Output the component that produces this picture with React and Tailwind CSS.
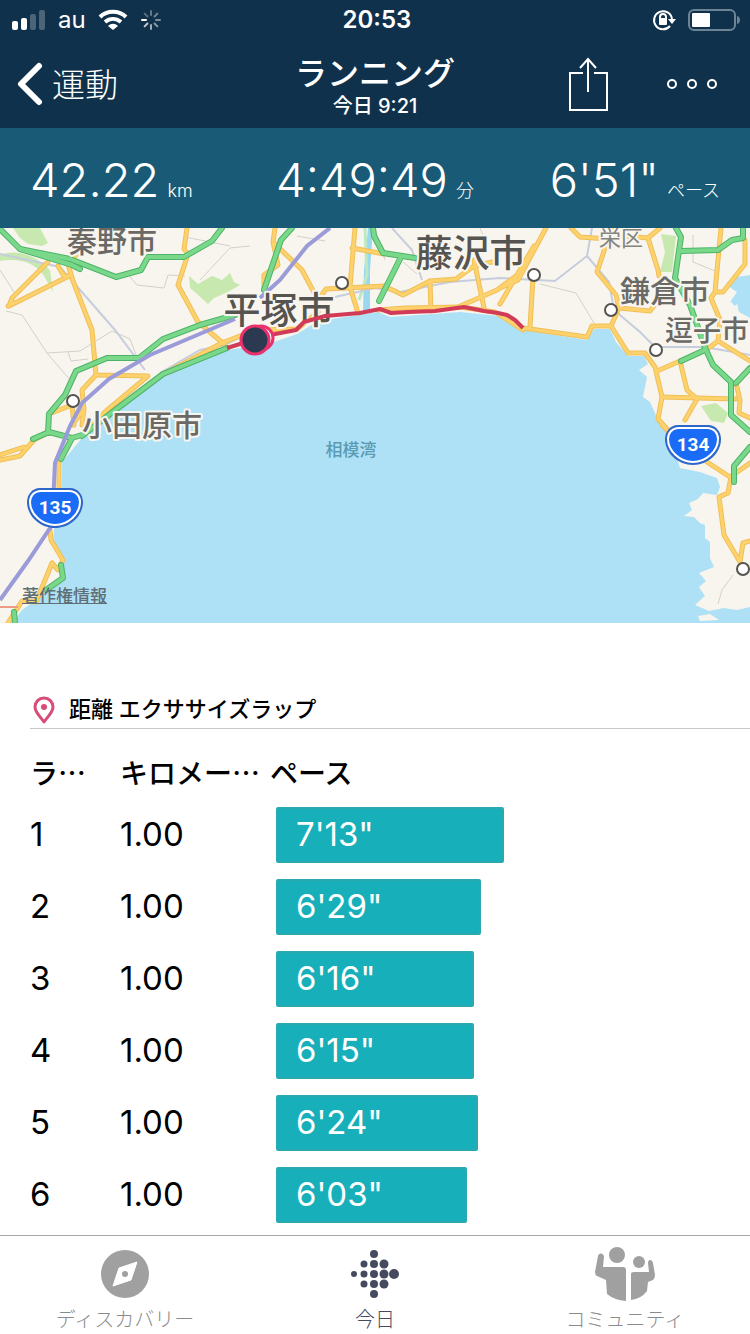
import React from 'react';

const laps = [
  { lap: 1, km: '1.00', pace: `7'13"`, seconds: 433 },
  { lap: 2, km: '1.00', pace: `6'29"`, seconds: 389 },
  { lap: 3, km: '1.00', pace: `6'16"`, seconds: 376 },
  { lap: 4, km: '1.00', pace: `6'15"`, seconds: 375 },
  { lap: 5, km: '1.00', pace: `6'24"`, seconds: 384 },
  { lap: 6, km: '1.00', pace: `6'03"`, seconds: 363 },
];

// Pace that would fill the whole bar column
const FULL_BAR_SECONDS = 843;

const greenRoads = [
  'M0 229 L20 249 L70 259 L116 277 L141 270 L148 257 L184 257 L212 241 L222 228',
  'M20 249 L72 265 L80 269',
  'M235 315 L200 325 L163 339 L139 358 L107 358 L76 371 L65 395 L49 414 L48 433',
  'M227 348 L163 374 L110 414 L82 436',
  'M33 439 L49 432 L72 438 L82 435 M72 438 L61 459',
  'M292 228 L281 240 L264 290',
  'M373 228 L374 236 L383 253 L415 258 M401 257 L379 301',
  'M676 228 L681 237 L675 278 L690 305 L706 350 L713 365 L731 382 L731 415 L750 432',
  'M681 251 L718 250 L732 240 L743 238 L743 228',
  'M681 361 L705 350 M736 383 L750 368',
  'M750 447 L734 466 L734 482',
  'M61 565 L63 578 L46 590 M15 623 L14 612',
];

const yellowRoads = [
  'M48 262 L12 298 L9 306 L69 276 L64 276 L58 266 M12 302 L8 306',
  'M78 253 L68 264 L73 281 L92 330 L96 375 M96 375 L148 376 L105 412 L82 436',
  'M96 375 L82 390 L84 410 L82 425 M49 414 L72 405 L74 425',
  'M187 228 L184 249 L188 254 L178 285 L198 322 L224 344',
  'M160 376 L222 343 L255 330 L297 329 L318 312',
  'M275 228 L273 242 L302 270 L318 300 M273 242 L278 265 L264 275 L264 290',
  'M355 228 L350 287 L358 313 M352 248 L384 254',
  'M318 300 L326 289 L384 286 L403 295 L430 281 L456 279 L474 266 L492 262',
  'M430 281 L431 311 M474 260 L484 308',
  'M500 288 L518 280 L546 228 M458 307 L497 290 L516 276',
  'M500 304 L534 246 M533 277 L530 327',
  'M378 310 L405 308 L460 307 L495 312 L523 330',
  'M523 328 L587 337 L592 326 L611 326 L628 353 L645 353 L655 367 L662 397 L658 419 L667 429',
  'M611 326 L619 308 L650 311 L656 303',
  'M571 228 L580 237 L608 239 L597 272 L616 295 L619 308',
  'M648 238 L660 228 M648 238 L658 270 L659 276',
  'M612 228 L614 235 L648 238',
  'M721 228 L715 292 L723 292 L745 264 L745 240 M715 292 L711 298 L720 320 L718 341 L750 361',
  'M657 371 L680 361 L687 390 L697 399 L685 420',
  'M680 361 L706 350 L718 341 M662 397 L736 399 M736 383 L740 400 L739 413 L750 418',
  'M662 425 L680 443 M707 462 L730 477 L750 463',
  'M731 477 L728 493 L719 497 L724 535 L740 562 L743 543 L750 541',
  'M0 460 L20 456 L34 440 L49 432 M0 455 L24 447',
  'M59 459 L59 492 M50 530 L51 540 L63 560 L58 570 L52 563 L36 602 L22 601 L8 623',
  'M72 425 L82 412',
];

const railways = [
  'M0 600 L28 561 L52 525 L55 463 L70 426 L82 403 L109 379 L150 355 L235 319',
  'M260 298 L280 280 L307 246 L330 228',
];

const thinRails = [
  'M0 254 L60 267 L115 330 L145 370',
  'M160 373 L200 350 L225 345 L258 328',
  'M335 297 L375 288 L400 292 L450 282 L500 278 L555 281 L587 256 L592 228',
  'M392 228 L412 250 L422 280',
  'M587 256 L609 282 L614 310 L640 332 L655 347 L705 347 L750 355',
];

const footpaths = [
  'M0 270 L14 292 M6 311 L22 315 L47 353 L71 381',
  'M47 353 L80 351 L112 331 L130 339 L138 360',
  'M126 272 L137 285 L164 288 L168 275 L185 276 M200 280 L230 248 L250 246',
  'M68 352 L71 361 L88 359 M185 237 L230 246',
  'M297 236 L325 241 M385 260 L375 228 M403 262 L417 274 M480 228 L485 240',
  'M540 284 L576 293 L594 323 M693 235 L693 262 L715 271',
  'M718 604 L722 590 L733 575',
];

const stations = [
  [342, 283],
  [534, 275],
  [611, 310],
  [656, 350],
  [73, 401],
  [743, 569],
];

const places = [
  { name: '秦野市', x: 112, y: 252, className: 'text-[30px] font-medium fill-[#6a6965]' },
  { name: '藤沢市', x: 471, y: 267, className: 'text-[37px] font-medium fill-[#555450]' },
  { name: '平塚市', x: 279, y: 324, className: 'text-[37px] font-medium fill-[#555450]' },
  { name: '小田原市', x: 142, y: 436, className: 'text-[30px] font-medium fill-[#6a6965]' },
  { name: '鎌倉市', x: 665, y: 302, className: 'text-[30px] font-medium fill-[#6a6965]' },
  { name: '逗子市', x: 707, y: 341, className: 'text-[28px] font-medium fill-[#6a6965]' },
  { name: '栄区', x: 621, y: 246, className: 'text-[22px] fill-[#85837f]' },
];

const Roads = ({ paths, casing, fill, outer, inner }) => (
  <g fill="none" strokeLinejoin="round" strokeLinecap="round">
    {paths.map((d) => (
      <path key={d} d={d} stroke={casing} strokeWidth={outer} />
    ))}
    {paths.map((d) => (
      <path key={`${d}-in`} d={d} stroke={fill} strokeWidth={inner} />
    ))}
  </g>
);

const Shield = ({ x, y, number }) => (
  <g transform={`translate(${x} ${y})`}>
    <path d="M-15 -20 H15 C23 -20 28 -13 28 -6 C28 8 15 20 0 20 C-15 20 -28 8 -28 -6 C-28 -13 -23 -20 -15 -20Z" fill="#2f66c9" />
    <path
      d="M-14 -17 H14 C21 -17 25 -12 25 -6 C25 6 13 17 0 17 C-13 17 -25 6 -25 -6 C-25 -12 -21 -17 -14 -17Z"
      fill="#1a6bf5"
      stroke="#fff"
      strokeWidth="2"
    />
    <text y="6" textAnchor="middle" className="fill-white font-[Roboto,sans-serif] text-[19px] font-bold">
      {number}
    </text>
  </g>
);

const RouteMap = () => (
  <svg viewBox="0 228 750 395" className="block w-full" role="img" aria-label="ルート">
    <rect x="0" y="228" width="750" height="395" fill="#f8f5ee" />

    {/* parks */}
    <g fill="#c7e9b0">
      <path d="M13 228 L40 228 L48 243 L42 246 L28 244 L20 238Z" />
      <path d="M0 255 C15 249 35 254 50 270 L53 292 L44 276 C35 262 18 258 0 261Z" />
      <path d="M189 276 L198 284 L212 276 L222 280 L230 273 L234 282 L240 285 L228 292 L214 298 L208 304 L196 293 L190 288Z" />
      <path d="M661 234 L676 236 L672 272 L660 272 L665 252Z" />
      <path d="M701 406 L716 403 L728 413 L724 423 L711 421Z" />
    </g>

    {/* sea */}
    <path
      fill="#aee1f6"
      d="M12 623 L22 610 L46 593 L64 580 L63 560 L53 540 L55 520 L62 490 L62 462 L82 438
        L112 416 L163 377 L227 350 L268 344 L297 334 L318 321 L358 315 L378 312 L390 317
        L460 312 L500 316 L523 330 L587 340 L594 329 L610 329 L616 342 L628 356 L644 356
        L648 364 L639 370 L647 377 L643 397 L650 402 L655 413 L658 421 L670 434 L680 468
        L700 472 L717 478 L720 487 L717 495 L703 493 L698 499 L689 503 L692 510 L684 516
        L694 517 L700 523 L705 525 L705 538 L710 542 L710 558 L714 567 L699 573 L706 581
        L699 587 L705 596 L695 605 L709 611 L724 608 L737 610 L750 607 L750 623Z
        M750 275 L736 277 L728 286 L737 292 L730 302 L737 303 L739 312 L750 318Z"
    />
    <path d="M698 616 L710 614 L719 620 L700 621Z" fill="#f8f5ee" />
    <path d="M368 228 L373 228 L370 270 L370 310 L363 312 L364 270Z" fill="#9ad9ed" />
    <path d="M365 228 L367 275 L359 300" fill="none" stroke="#bce8c4" strokeWidth="3" />
    <path d="M733 304 L750 292" stroke="#aee1f6" strokeWidth="5" />

    <g fill="none" stroke="#d4d1ca" strokeWidth="1">
      {footpaths.map((d) => (
        <path key={d} d={d} />
      ))}
    </g>
    <g fill="none" stroke="#c6cddd" strokeWidth="2">
      {thinRails.map((d) => (
        <path key={d} d={d} />
      ))}
    </g>
    <Roads paths={yellowRoads} casing="#f0bf58" fill="#fdd26c" outer={5} inner={3} />
    <Roads paths={greenRoads} casing="#4db368" fill="#7ad88a" outer={6} inner={4} />
    <g fill="none" stroke="#9a9bd8" strokeWidth="4">
      {railways.map((d) => (
        <path key={d} d={d} />
      ))}
    </g>
    <path d="M0 607 H18" stroke="#ef9a86" strokeWidth="2" />

    {stations.map(([cx, cy]) => (
      <circle key={cx} cx={cx} cy={cy} r="6" fill="#fff" stroke="#55534f" strokeWidth="2" />
    ))}

    <g textAnchor="middle" stroke="#f8f5ee" strokeWidth="4" strokeLinejoin="round" paintOrder="stroke">
      {places.map((p) => (
        <text key={p.name} x={p.x} y={p.y} className={p.className}>
          {p.name}
        </text>
      ))}
    </g>
    <text x="351" y="456" textAnchor="middle" className="fill-[#5b9ab3] text-[17px] font-medium">
      相模湾
    </text>

    <Shield x={55} y={508} number="135" />
    <Shield x={693} y={445} number="134" />

    {/* run track with start and finish */}
    <path
      d="M227 348 L240 344 L270 335 L296 330 L304 322 L325 316 L360 313 L380 309 L391 313 L408 312 L435 311 L464 307 L484 311 L498 313 L507 315 L515 320 L523 328"
      fill="none"
      stroke="#d13b58"
      strokeWidth="4"
      strokeLinejoin="round"
    />
    <circle cx="261" cy="338" r="12" fill="#fff" stroke="#e8316d" strokeWidth="3" />
    <circle cx="255" cy="340" r="14" fill="#2b3a50" stroke="#e8316d" strokeWidth="3" />
  </svg>
);

const Spinner = () => (
  <svg width="22" height="22" viewBox="-11 -11 22 22" stroke="#fff" strokeWidth="2" strokeLinecap="round">
    {[0.35, 0.4, 0.45, 0.5, 0.6, 0.75, 1, 0.3].map((opacity, i) => (
      <path key={i} d="M0 -5 V-9" opacity={opacity} transform={`rotate(${i * 45})`} />
    ))}
  </svg>
);

const StatusBar = () => (
  <div className="grid h-10 grid-cols-3 items-center pr-2 pl-3">
    <div className="flex items-center">
      <svg width="34" height="22" viewBox="0 0 34 22" fill="#fff">
        <rect x="0" y="12" width="6" height="9" rx="2" />
        <rect x="9" y="9" width="6" height="12" rx="2" />
        <rect x="18" y="5" width="6" height="16" rx="2" opacity="0.25" />
        <rect x="27" y="1" width="6" height="20" rx="2" opacity="0.25" />
      </svg>
      <span className="ml-3 text-2xl">au</span>
      <svg className="ml-3" width="30" height="22" viewBox="0 0 30 22" fill="none" stroke="#fff" strokeWidth="4">
        <path d="M2 8 C9 1 21 1 28 8" />
        <path d="M7 13 C12 9 18 9 23 13" />
        <path d="M15 21 L10 17 C13 14 17 14 20 17Z" fill="#fff" stroke="none" />
      </svg>
      <span className="ml-3">
        <Spinner />
      </span>
    </div>
    <div className="text-center text-2xl font-semibold">20:53</div>
    <div className="flex items-center justify-end gap-3">
      <svg width="24" height="22" viewBox="0 0 24 22" fill="none" stroke="#fff" strokeWidth="2">
        <path d="M18 17 A9 9 0 1 1 20 10" />
        <path d="M16 10 H24 L20 15Z" fill="#fff" stroke="none" />
        <rect x="7" y="9" width="8" height="7" rx="1" fill="#fff" stroke="none" />
        <path d="M8 10 V8 A3 3 0 0 1 14 8 V10" />
      </svg>
      <svg width="54" height="24" viewBox="0 0 54 24">
        <rect x="1" y="2" width="46" height="20" rx="5" fill="none" stroke="#6d8494" strokeWidth="2" />
        <rect x="4" y="5" width="18" height="14" rx="1" fill="#fff" />
        <path d="M49 8 C53 9 53 15 49 16Z" fill="#6d8494" />
      </svg>
    </div>
  </div>
);

const NavBar = () => (
  <div className="grid h-22 grid-cols-3 items-center pl-4 pr-8">
    <button className="flex items-center gap-2 text-[33px] font-light">
      <svg width="28" height="44" viewBox="0 0 28 44" fill="none" stroke="#fff" strokeWidth="6" strokeLinecap="round" strokeLinejoin="round">
        <path d="M23 4 L5 22 L23 40" />
      </svg>
      <span className="pt-1">運動</span>
    </button>
    <div className="ml-4 pt-1 text-center">
      <h1 className="text-[32px] leading-10 font-medium">ランニング</h1>
      <p className="text-xl leading-6 font-medium">今日 9:21</p>
    </div>
    <div className="flex items-center justify-end gap-14">
      <button aria-label="共有">
        <svg width="42" height="56" viewBox="0 0 42 56" fill="none" stroke="#fff" strokeWidth="2">
          <path d="M15 17 H2 V54 H39 V17 H26" />
          <path d="M20 36 V3 M12 12 L20 3 L28 12" />
        </svg>
      </button>
      <button aria-label="その他">
        <svg width="52" height="12" viewBox="0 0 52 12" fill="none" stroke="#fff" strokeWidth="2">
          <circle cx="6" cy="6" r="4" />
          <circle cx="26" cy="6" r="4" />
          <circle cx="46" cy="6" r="4" />
        </svg>
      </button>
    </div>
  </div>
);

const Stat = ({ value, unit }) => (
  <div className="flex items-baseline gap-2">
    <span className="text-[47px] font-light">{value}</span>
    <span className="text-lg font-light">{unit}</span>
  </div>
);

const LapTable = () => (
  <table className="mt-2 w-full table-fixed text-left">
    <thead>
      <tr className="h-[62px] font-['Noto_Sans_CJK_JP',sans-serif] text-[28px]">
        <th className="w-[120px] pt-2 pl-[30px] font-medium">ラ…</th>
        <th className="w-[150px] pt-2 font-medium whitespace-nowrap">キロメー…</th>
        <th className="pt-2 font-medium">ペース</th>
      </tr>
    </thead>
    <tbody>
      {laps.map((lap) => (
        <tr key={lap.lap} className="h-18 text-[33px]">
          <td className="pl-[30px]">{lap.lap}</td>
          <td>{lap.km}</td>
          <td className="pr-[30px] pl-[6px]">
            <div
              className="flex h-14 items-center rounded-xs border-2 border-[#2ba9b1] bg-[#17afb9] pl-[18px] text-white"
              style={{ width: `${(lap.seconds / FULL_BAR_SECONDS) * 100}%` }}
            >
              {lap.pace}
            </div>
          </td>
        </tr>
      ))}
    </tbody>
  </table>
);

const CompassIcon = () => (
  <svg width="60" height="56" viewBox="0 0 60 56">
    <circle cx="30" cy="28" r="24" fill="#a0a0a0" />
    <path d="M42 16 L36 34 L18 40 L24 22Z" fill="#fff" stroke="#fff" strokeLinejoin="round" />
    <circle cx="30" cy="28" r="3" fill="#a0a0a0" />
  </svg>
);

// Each column: x, radius, vertical positions
const dotColumns = [
  [9, 3, [28]],
  [19, 3.5, [18, 28, 38]],
  [29, 4, [8, 18, 28, 38, 48]],
  [39, 4.5, [18, 28, 38]],
  [49, 5, [28]],
];

const DotsIcon = () => (
  <svg width="60" height="56" viewBox="0 0 60 56" fill="#454a5f">
    {dotColumns.map(([cx, r, ys]) => ys.map((cy) => <circle key={`${cx}-${cy}`} cx={cx} cy={cy} r={r} />))}
  </svg>
);

const CommunityIcon = () => (
  <svg width="60" height="56" viewBox="0 0 60 56" fill="#a0a0a0">
    <circle cx="22" cy="9" r="8" />
    <circle cx="44" cy="16" r="6" />
    <path d="M3 10 C4 6 9 7 9 11 L8 21 H28 Q31 21 31 24 V55 Q19 54 12 48 L11 34 L2 30 Q0 29 0 26Z" />
    <path d="M36 54 V28 Q36 26 39 26 H54 L53 17 C53 13 57 13 58 17 L60 29 Q60 32 58 34 L53 36 L52 45 Q46 53 36 54Z" />
  </svg>
);

const tabs = [
  { label: 'ディスカバリー', icon: CompassIcon, className: 'text-[#8b8b8b]' },
  { label: '今日', icon: DotsIcon, className: 'text-[#454a5f]' },
  { label: 'コミュニティ', icon: CommunityIcon, className: 'text-[#8b8b8b]' },
];

export default function App() {
  return (
    <div className="flex min-h-screen flex-col bg-white font-[Inter,'Noto_Sans_CJK_JP',sans-serif] text-black">
      <header className="bg-[#10314b] text-white">
        <StatusBar />
        <NavBar />
      </header>

      <section className="grid h-[100px] grid-cols-[1fr_auto_1fr] items-center bg-[#195b76] px-[30px] pt-1 text-white">
        <Stat value="42.22" unit="km" />
        <Stat value="4:49:49" unit="分" />
        <div className="justify-self-end">
          <Stat value={`6'51"`} unit="ペース" />
        </div>
      </section>

      <div className="relative">
        <RouteMap />
        <a href="#legal" className="absolute bottom-[14px] left-[22px] text-[17px] font-medium text-[#5f6f75] underline">
          著作権情報
        </a>
      </div>

      <main className="flex-1 pt-16">
        <div className="ml-[30px] flex h-[42px] items-center gap-3 border-b border-[#c8c8c8] pt-1">
          <svg width="27" height="30" viewBox="0 0 27 30" fill="none" stroke="#d84c78" strokeWidth="3">
            <path d="M14 27 C9 20 5 17 5 12 A9 9 0 0 1 23 12 C23 17 19 20 14 27Z" strokeLinejoin="round" />
            <circle cx="14" cy="12" r="3" fill="#d84c78" stroke="none" />
          </svg>
          <h2 className="text-[22px] font-medium">距離 エクササイズラップ</h2>
        </div>
        <LapTable />
      </main>

      <nav className="grid h-[99px] grid-cols-3 border-t border-[#a8a8a8]">
        {tabs.map(({ label, icon: Icon, className }) => (
          <button key={label} className={`flex flex-col items-center pt-[10px] text-xl leading-9 font-light ${className}`}>
            <Icon />
            {label}
          </button>
        ))}
      </nav>
    </div>
  );
}
